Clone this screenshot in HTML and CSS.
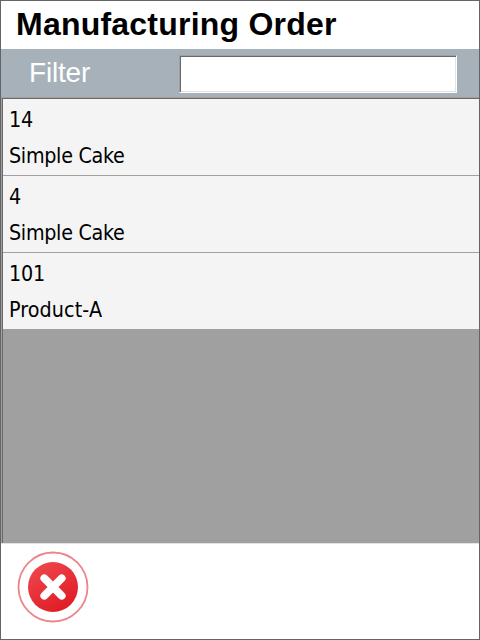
FILE: index.html
```
<!DOCTYPE html>
<html lang="en">
<head>
<meta charset="utf-8">
<title>Manufacturing Order</title>
<link rel="stylesheet" href="styles.css">
</head>
<body>
<main class="window">
  <h1 class="title">Manufacturing Order</h1>
  <div class="filter">
    <label class="filter-label" for="filter">Filter</label>
    <input class="filter-input" id="filter" type="text">
  </div>
  <ul class="list">
    <li class="row"><span>14</span><span class="name">Simple Cake</span></li>
    <li class="row"><span>4</span><span class="name">Simple Cake</span></li>
    <li class="row"><span>101</span><span class="name name-wide">Product-A</span></li>
  </ul>
  <footer class="footer">
    <button class="close" type="button" aria-label="Close">
      <svg width="72" height="72" viewBox="0 0 72 72">
        <defs>
          <linearGradient id="red" x1="0.2" y1="0" x2="0.8" y2="1">
            <stop offset="0" stop-color="#ee474d"/>
            <stop offset="1" stop-color="#de1a22"/>
          </linearGradient>
        </defs>
        <circle cx="36" cy="36" r="34.5" fill="#fff" stroke="#ec8589" stroke-width="1.8"/>
        <circle cx="36" cy="36" r="25" fill="url(#red)"/>
        <path d="M27.3 27.3 L44.7 44.7 M44.7 27.3 L27.3 44.7" stroke="#fff" stroke-width="7.8" stroke-linecap="round"/>
      </svg>
    </button>
  </footer>
</main>
</body>
</html>
```
FILE: styles.css
```
* { box-sizing: border-box; }
body { margin: 0; }
.window {
  display: flex;
  flex-direction: column;
  width: 480px;
  height: 640px;
  border: 1px solid #646464;
  background: #fff;
  color: #000;
  font-family: "Liberation Sans", Arial, sans-serif;
}
.title {
  height: 48px;
  margin: 0;
  padding-left: 15px;
  font-size: 32px;
  letter-spacing: 0.22px;
  line-height: 46px;
  white-space: nowrap;
}
.filter {
  display: flex;
  height: 48px;
  padding: 6px 22px 0 28px;
  justify-content: space-between;
  background: #a7b1b9;
}
.filter-label {
  color: #fff;
  font-size: 28px;
  letter-spacing: -0.2px;
  line-height: 35px;
}
.filter-input {
  width: 278px;
  height: 38px;
  padding: 0 4px;
  border: 1px solid;
  border-color: #a0a0a0 #fff #fff #a0a0a0;
  border-radius: 0;
  outline: none;
  background: #fff;
  box-shadow: inset 1px 1px #696969, inset -1px -1px #e3e3e3;
  font-size: 24px;
}
.list {
  height: 447px;
  margin: 0;
  padding: 2px 0 0 2px;
  list-style: none;
  background: #a0a0a0;
  border-bottom: 1px solid #e3e3e3;
  box-shadow: inset 1px 1px #a0a0a0, inset 2px 2px #696969;
}
.row {
  display: flex;
  flex-direction: column;
  height: 77px;
  padding: 3px 0 0 6px;
  border-bottom: 1px solid #a0a0a0;
  background: #f4f4f4;
  font-family: "DejaVu Sans Condensed", "DejaVu Sans", sans-serif;
  font-stretch: condensed;
  font-size: 21.3px;
  letter-spacing: -0.2px;
  line-height: 36px;
}
.name { letter-spacing: -0.3px; }
.name-wide { letter-spacing: 0.1px; }
.footer { padding: 7px 0 0 16px; }
.close {
  display: block;
  padding: 0;
  border: 0;
  background: none;
}
.close svg { display: block; }
```
